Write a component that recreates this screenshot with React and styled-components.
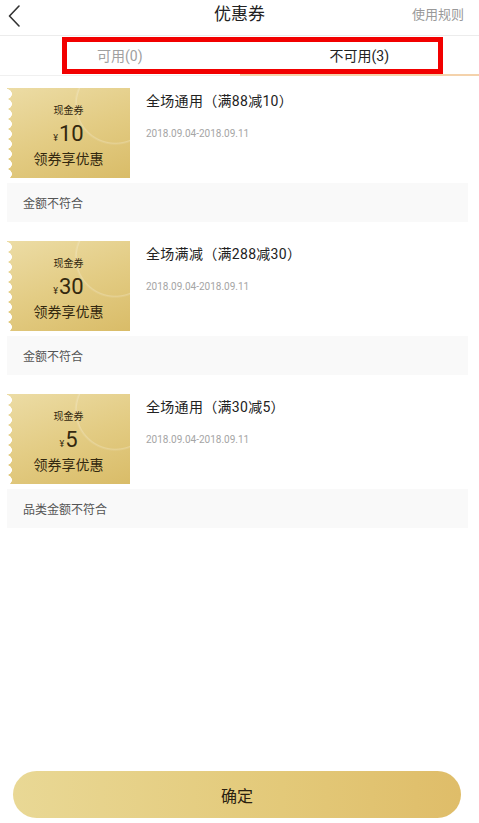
import React from 'react'
import styled, { createGlobalStyle } from 'styled-components'

const GlobalStyle = createGlobalStyle`
  html, body {
    margin: 0;
    padding: 0;
    background: #fff;
  }
  body {
    font-family: Roboto, "Noto Sans CJK SC", sans-serif;
  }
`

const Page = styled.div`
  width: 100%;
  min-height: 100vh;
  display: flex;
  flex-direction: column;
  background: #fff;
`

const Header = styled.div`
  height: 35px;
  display: flex;
  align-items: center;
  justify-content: center;
  position: relative;
  border-bottom: 1px solid #ececec;
`

const BackButton = styled.div`
  position: absolute;
  left: 8px;
  top: 4px;
  width: 16px;
  height: 24px;
  display: flex;
  align-items: center;
`

const HeaderTitle = styled.div`
  font-size: 17px;
  color: #222;
  font-family: "Noto Sans CJK SC", sans-serif;
  margin-top: -11px;
`

const RulesLink = styled.div`
  position: absolute;
  right: 15px;
  top: 5px;
  font-size: 13px;
  line-height: 18px;
  color: #999;
  font-family: "Noto Sans CJK SC", sans-serif;
`

const Tabs = styled.div`
  position: relative;
  height: 39px;
  display: flex;
  border-bottom: 1px solid #f0f0f0;
`

const Tab = styled.div`
  flex: 1;
  display: flex;
  align-items: center;
  justify-content: center;
  font-size: 14px;
  font-family: Roboto, "Noto Sans CJK SC", sans-serif;
  color: ${p => (p.active ? '#222' : '#a0a0a0')};
  border-bottom: 2px solid ${p => (p.active ? '#f4d2ab' : 'transparent')};
  margin-bottom: -1px;
`

const Highlight = styled.div`
  position: absolute;
  left: 62px;
  top: 1px;
  width: 381px;
  height: 37px;
  box-sizing: border-box;
  border: 5px solid #f20000;
  pointer-events: none;
`

const List = styled.div`
  display: flex;
  flex-direction: column;
  gap: 19px;
  padding: 12px 11px 0 7px;
`

const Card = styled.div`
  display: flex;
  flex-direction: column;
  gap: 5px;
`

const Row = styled.div`
  display: flex;
  height: 90px;
`

const Ticket = styled.div`
  position: relative;
  width: 123px;
  flex-shrink: 0;
  box-sizing: border-box;
  padding-top: 15px;
  display: flex;
  flex-direction: column;
  align-items: center;
  color: #33280f;
  font-family: "Noto Sans CJK SC", sans-serif;
  background:
    radial-gradient(circle at 88% 18%, rgba(255, 255, 255, 0) 38px, rgba(255, 255, 255, 0.22) 39px, rgba(255, 255, 255, 0) 41px),
    linear-gradient(160deg, #ecdca5 0%, #e3cc84 50%, #d9bc68 100%);
  overflow: hidden;

  /* scalloped stamp edge */
  &::before {
    content: '';
    position: absolute;
    left: -5px;
    top: 1px;
    bottom: 0;
    width: 10px;
    background: radial-gradient(circle at 5px 5px, #fff 4.6px, transparent 5.1px);
    background-size: 10px 10px;
  }
`

const TicketLabel = styled.div`
  font-size: 10px;
  line-height: 14px;
`

const Amount = styled.div`
  margin-top: 3px;
  font-family: Roboto, sans-serif;
  font-size: 22px;
  line-height: 28px;
  display: flex;
  align-items: baseline;

  small {
    font-size: 9px;
    margin-right: 1px;
  }
`

const TicketSlogan = styled.div`
  margin-top: -4px;
  font-size: 14px;
  line-height: 20px;
`

const Info = styled.div`
  padding: 3px 0 0 16px;
  display: flex;
  flex-direction: column;
`

const CouponTitle = styled.div`
  font-size: 14px;
  line-height: 20px;
  color: #222;
  font-family: Roboto, "Noto Sans CJK SC", sans-serif;
  letter-spacing: 0.3px;
`

const DateRange = styled.div`
  margin-top: 17px;
  font-size: 10px;
  color: #a5a5a5;
  font-family: Roboto, sans-serif;
`

const Reason = styled.div`
  height: 39px;
  background: #f9f9f9;
  display: flex;
  align-items: center;
  padding-left: 16px;
  font-size: 12px;
  color: #555;
  font-family: "Noto Sans CJK SC", sans-serif;
`

const Footer = styled.div`
  margin-top: auto;
  padding: 0 18px 5px 13px;
`

const ConfirmButton = styled.button`
  width: 100%;
  height: 47px;
  border: none;
  border-radius: 24px;
  background: linear-gradient(90deg, #e9d895 0%, #e3c979 60%, #dfbd69 100%);
  color: #2a2110;
  font-size: 16px;
  font-family: "Noto Sans CJK SC", sans-serif;
  cursor: pointer;
`

const coupons = [
  { amount: 10, title: '全场通用（满88减10）', reason: '金额不符合' },
  { amount: 30, title: '全场满减（满288减30）', reason: '金额不符合' },
  { amount: 5, title: '全场通用（满30减5）', reason: '品类金额不符合' },
]

const Chevron = () => (
  <svg width="12" height="22" viewBox="0 0 12 22" fill="none">
    <path d="M11 1L1.5 11L11 21" stroke="#333" strokeWidth="1.6" strokeLinecap="round" strokeLinejoin="round" />
  </svg>
)

const App = () => (
  <Page>
    <GlobalStyle />
    <Header>
      <BackButton>
        <Chevron />
      </BackButton>
      <HeaderTitle>优惠券</HeaderTitle>
      <RulesLink>使用规则</RulesLink>
    </Header>
    <Tabs>
      <Tab>可用(0)</Tab>
      <Tab active>不可用(3)</Tab>
      <Highlight />
    </Tabs>
    <List>
      {coupons.map(c => (
        <Card key={c.title}>
          <Row>
            <Ticket>
              <TicketLabel>现金券</TicketLabel>
              <Amount>
                <small>¥</small>
                {c.amount}
              </Amount>
              <TicketSlogan>领券享优惠</TicketSlogan>
            </Ticket>
            <Info>
              <CouponTitle>{c.title}</CouponTitle>
              <DateRange>2018.09.04-2018.09.11</DateRange>
            </Info>
          </Row>
          <Reason>{c.reason}</Reason>
        </Card>
      ))}
    </List>
    <Footer>
      <ConfirmButton>确定</ConfirmButton>
    </Footer>
  </Page>
)

export default App
